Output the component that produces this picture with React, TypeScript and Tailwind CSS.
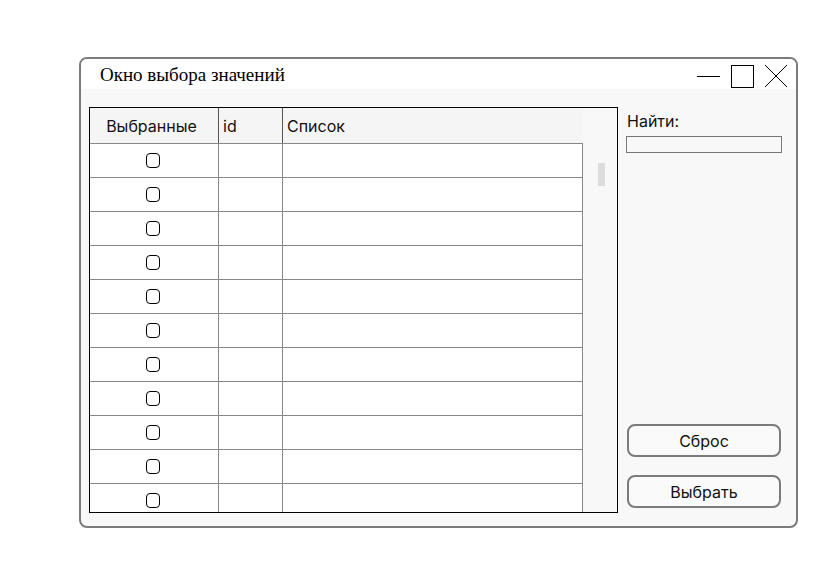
import React from "react";

const rows = Array.from({ length: 11 }, (_, i) => i);

export default function App() {
  return (
    <div className="w-[826px] h-[586px] bg-white pt-[57px] pl-[79px]" style={{ fontFamily: "Inter, 'Noto Sans', sans-serif" }}>
      {/* Window */}
      <div className="w-[719px] h-[471px] border-2 border-[#7b7b7b] rounded-[8px] bg-[#f8f8f8] flex flex-col overflow-hidden">
        {/* Title bar */}
        <div className="h-[30px] bg-white flex items-center justify-between shrink-0">
          <span className="pl-[19px] pt-[3px] text-[19px] text-black" style={{ fontFamily: "'Liberation Serif', 'Times New Roman', serif" }}>
            Окно выбора значений
          </span>
          <div className="flex items-center pr-[8px] pt-[4px]">
            <div className="w-[23px] h-px bg-black mr-[11px]" />
            <div className="w-[23px] h-[23px] border border-black mr-[10px]" />
            <svg width="24" height="24" viewBox="0 0 24 24">
              <path d="M1 1 L23 23 M23 1 L1 23" stroke="black" strokeWidth="1" fill="none" />
            </svg>
          </div>
        </div>

        {/* Body */}
        <div className="flex flex-1 pt-[18px] pl-[8px] pb-[13px]">
          {/* Table */}
          <div className="w-[529px] h-[406px] border border-black flex overflow-hidden bg-white">
            <div className="w-[493px] flex flex-col">
              <div className="h-[36px] bg-[#f5f5f5] flex border-b border-[#888] shrink-0 text-[16px] text-[#111]">
                <div className="w-[129px] border-r border-[#555] flex items-center justify-center pr-[5px]">Выбранные</div>
                <div className="w-[64px] border-r border-[#555] flex items-center pl-[4px]">id</div>
                <div className="flex-1 flex items-center pl-[4px]">Список</div>
              </div>
              <div className="flex-1 overflow-hidden border-r border-[#888]">
                {rows.map((r) => (
                  <div key={r} className="h-[34px] flex border-b border-[#888] shrink-0">
                    <div className="w-[129px] border-r border-[#888] flex items-center justify-center">
                      <div className="w-[14px] h-[15px] border border-black rounded-[4px] mr-[3px]" />
                    </div>
                    <div className="w-[64px] border-r border-[#888]" />
                    <div className="flex-1" />
                  </div>
                ))}
              </div>
            </div>
            <div className="flex-1 bg-[#f8f8f8] pt-[55px] pl-[15px]">
              <div className="w-[7px] h-[23px] bg-[#dcdcdc]" />
            </div>
          </div>

          {/* Right panel */}
          <div className="flex flex-col pl-[8px] flex-1 pr-[14px]">
            <div className="pt-[4px] pl-[1px] text-[16px] text-[#111] leading-[20px]">Найти:</div>
            <div className="mt-[5px] w-[156px] h-[17px] border border-[#777] bg-[#f8f8f8]" />
            <div className="flex-1" />
            <button className="ml-[1px] w-[154px] h-[33px] border-2 border-[#7b7b7b] rounded-[8px] text-[16px] text-[#111] bg-[#fafafa]">Сброс</button>
            <button className="ml-[1px] mt-[18px] w-[154px] h-[33px] border-2 border-[#7b7b7b] rounded-[8px] text-[16px] text-[#111] bg-[#fafafa] mb-[5px]">Выбрать</button>
          </div>
        </div>
      </div>
    </div>
  );
}
